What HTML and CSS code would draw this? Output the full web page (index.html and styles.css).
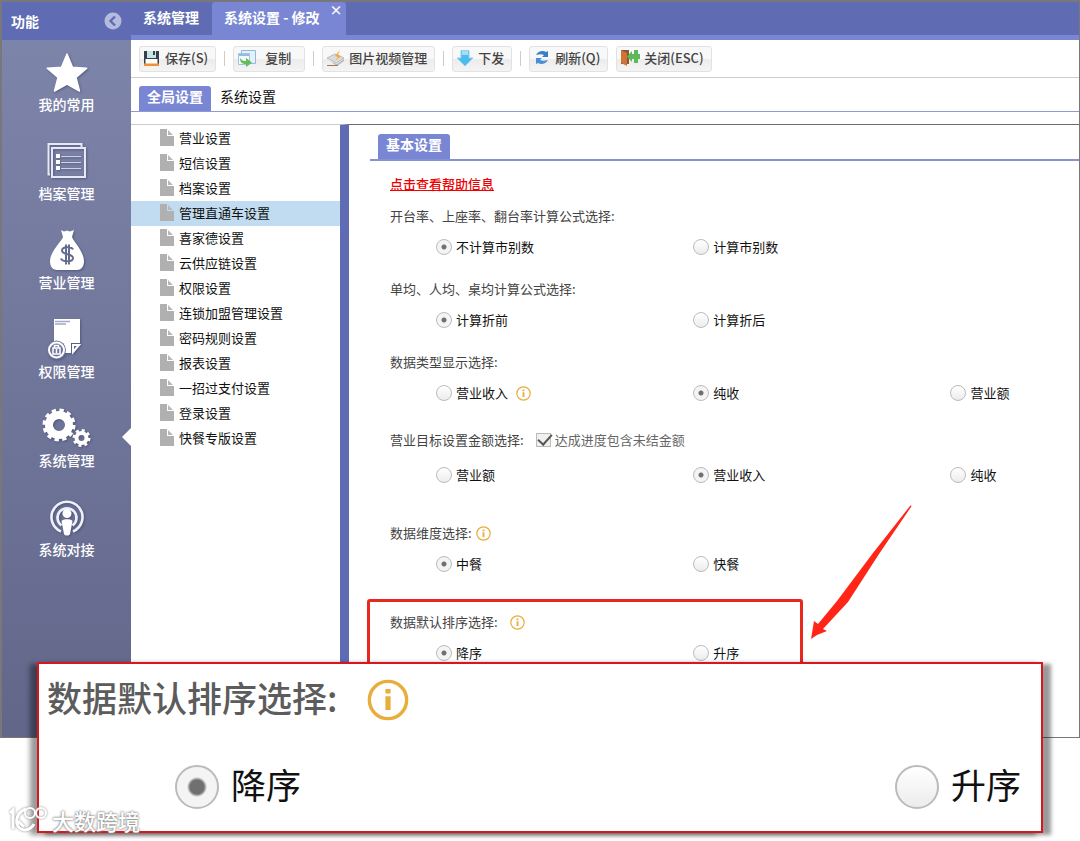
FILE: index.html
```html
<!DOCTYPE html>
<html lang="zh-CN">
<head>
    <meta charset="utf-8">
    <title>系统设置 - 修改</title>
    <link rel="stylesheet" href="styles.css">
</head>
<body>
<svg class="defs" width="0" height="0" aria-hidden="true">
    <symbol id="info" viewBox="0 0 16 16">
        <circle cx="8" cy="8" r="7.1" fill="none" stroke="#e8ae3c" stroke-width="1.300"/>
        <path d="M7 6.600h2v5.200H7zM7 3.800h2v1.700H7z" fill="#e8ae3c"/>
    </symbol>
    <symbol id="file" viewBox="0 0 14 17">
        <path d="M0 0h7v7h7v10H0z" fill="#b0b0b0"/>
        <path d="M8 1l5 5H8z" fill="#b8b8b8"/>
    </symbol>
</svg>
<div class="page">
    <div class="app">
        <aside class="sidebar">
            <div class="sidebar-head">
                <span>功能</span>
                <button class="collapse" type="button" aria-label="收起">
                    <svg width="18" height="18" viewBox="0 0 18 18"><circle cx="9" cy="9" r="8.500" fill="#b5bbdd"/><path d="M11 4.500L6.500 9l4.500 4.500" fill="none" stroke="#5f6cb4" stroke-width="2.400"/></svg>
                </button>
            </div>
            <nav class="menu">
                <a class="menu-item" href="#">
                    <svg width="50" height="44" viewBox="0 0 50 44"><path d="M25 4l5.500 13.200 14.300 1L34 27.500 37.500 41 25 34l-12.500 7L16 27.500 5.200 18.200l14.300-1z" fill="#fff" stroke="#fff" stroke-width="1.500" stroke-linejoin="round"/></svg>
                    <span>我的常用</span>
                </a>
                <a class="menu-item" href="#">
                    <svg width="50" height="44" viewBox="0 0 50 44"><g fill="none" stroke="#e6e9f5" stroke-width="2"><path d="M8 35.500H6.500V5h33v3"/><rect x="10" y="9" width="33" height="29"/></g><g fill="#fff"><path d="M14 15h4v4h-4zM14 21h4v4h-4zM14 27h4v4h-4z"/></g><path d="M19 17.500h20M19 23.500h20M19 29.500h20" stroke="#ccd1e8" stroke-width="1.200"/></svg>
                    <span>档案管理</span>
                </a>
                <a class="menu-item" href="#">
                    <svg width="50" height="44" viewBox="0 0 50 44"><path d="M19 2l3 1.500 3-1 3 1 4-1.500-2 7c2 5 12 15 12 24 0 6-3 9-7 9H15c-4 0-7-3-7-9 0-9 11-19 13-24z" fill="#fff"/><path d="M31 21.500c-1-3-11-3.500-11 1 0 5 11 2.500 11 7.500 0 4.500-11 4-12 .5M24 16.500v20M27 16.500v20" fill="none" stroke="#646b91" stroke-width="2"/></svg>
                    <span>营业管理</span>
                </a>
                <a class="menu-item" href="#">
                    <svg width="50" height="44" viewBox="0 0 50 44"><path d="M12 2h26v24h-9v10H12z" fill="#fff"/><path d="M37 28L31 35V28z" fill="none" stroke="#fff" stroke-width="2"/><path d="M13 4.500h15M13 7h11" stroke="#a4a9c6" stroke-width="1.500"/><circle cx="14.500" cy="33" r="9.500" fill="#70769d"/><circle cx="14.500" cy="33" r="7.500" fill="#70769d" stroke="#fff" stroke-width="2"/><path d="M11 31h7v6h-7zM12.500 31V28.500h4V31M14.500 32v4" fill="none" stroke="#fff" stroke-width="1.500"/></svg>
                    <span>权限管理</span>
                </a>
                <a class="menu-item active" href="#">
                    <svg width="50" height="44" viewBox="0 0 50 44"><circle cx="17" cy="19" r="10" fill="none" stroke="#fff" stroke-width="8"/><circle cx="17" cy="19" r="14.500" fill="none" stroke="#fff" stroke-width="4" stroke-dasharray="4.200 3.390"/><circle cx="39.500" cy="32" r="5" fill="none" stroke="#fff" stroke-width="4"/><circle cx="39.500" cy="32" r="7.500" fill="none" stroke="#fff" stroke-width="3" stroke-dasharray="2.900 2.990"/></svg>
                    <span>系统管理</span>
                </a>
                <a class="menu-item" href="#">
                    <svg width="50" height="44" viewBox="0 0 50 44"><g fill="none" stroke="#eef0fa" stroke-width="2.600"><path d="M19 36.500A15.500 15.500 0 1 1 31 36.500"/><path d="M19.500 30.500A9.500 9.500 0 1 1 30.500 30.500"/></g><circle cx="25" cy="18.500" r="4.500" fill="#fff"/><path d="M19.500 26c1-2.500 10-2.500 11 0L28 39c-1 2-5 2-6 0z" fill="#fff"/></svg>
                    <span>系统对接</span>
                </a>
            </nav>
        </aside>

        <div class="workspace">
            <header class="tabs">
                <a class="tab" href="#">系统管理</a>
                <div class="tab current">
                    <a href="#">系统设置 - 修改</a>
                    <button class="tab-close" type="button" aria-label="关闭标签">×</button>
                </div>
            </header>

            <div class="toolbar">
                <button class="tool" type="button">
                    <svg width="18" height="18" viewBox="0 0 18 18"><path d="M1 2h15v15H1z" fill="#34404c"/><path d="M4 2h9v7H4z" fill="#c9e3e6"/><path d="M10 2h2v4h-2z" fill="#34404c"/><path d="M2.500 10h12v5h-12z" fill="#fff"/><path d="M1 14.500h15V17H1z" fill="#ee9238"/></svg>
                    保存(S)
                </button>
                <i class="sep"></i>
                <button class="tool copy" type="button">
                    <svg width="20" height="18" viewBox="0 0 20 18"><path d="M4.500 1.500h14v13h-14z" fill="#e4f1fb" stroke="#90b9dd"/><path d="M1.500 4.500h11v11h-11z" fill="#f3f8fd" stroke="#a3c5e3"/><path d="M2 5h10v2H2z" fill="#8dbce6"/><path d="M3 9c2 3 4 3 6 3V9l6 4.500L9 18v-3c-4 0-6-2-6-6z" fill="#65bd58"/></svg>
                    复制
                </button>
                <i class="sep"></i>
                <button class="tool" type="button">
                    <svg width="19" height="18" viewBox="0 0 19 18"><path d="M1 9l8-4 9 4-8 5z" fill="#dcdcdc" stroke="#bbb"/><path d="M5 13l6 2 7-5v2l-7 5z" fill="#b7b7b7"/><path d="M14 1L9 7l3 1-3 4 6-5-3-1z" fill="#f2a93b"/><path d="M1 16.500h11" stroke="#a6784d"/></svg>
                    图片视频管理
                </button>
                <i class="sep"></i>
                <button class="tool" type="button">
                    <svg width="18" height="18" viewBox="0 0 18 18"><path d="M5 1.500h8V9h4l-8 8-8-8h4z" fill="#4dbbed" stroke="#8bd3f2"/><path d="M6 2h6v4H6z" fill="#a6def5"/></svg>
                    下发
                </button>
                <i class="sep"></i>
                <button class="tool" type="button">
                    <svg width="18" height="18" viewBox="0 0 18 18"><path d="M3 6c2-4 7-5 10-3l2-1v6H9l2-2C9 5 6 5 3 6z" fill="#387fc7"/><path d="M15 11c-2 4-7 5-10 3l-2 1V9h6l-2 2c2 1 5 1 8 0z" fill="#4a8fd3"/></svg>
                    刷新(Q)
                </button>
                <button class="tool" type="button">
                    <svg width="20" height="18" viewBox="0 0 20 18"><path d="M1 1h8v14H1z" fill="#8b5730"/><path d="M1 1l6 3v13l-6-3z" fill="#cf7435"/><path d="M7 7.500L12 2v3h2V1h4v4h2v5h-2v4h-4v-4h-2v3z" fill="#5db95a"/></svg>
                    关闭(ESC)
                </button>
            </div>

            <div class="subtabs">
                <a class="subtab on" href="#">全局设置</a>
                <a class="subtab" href="#">系统设置</a>
            </div>

            <div class="panes">
                <ul class="tree">
                    <li><a href="#"><svg><use href="#file"/></svg>营业设置</a></li>
                    <li><a href="#"><svg><use href="#file"/></svg>短信设置</a></li>
                    <li><a href="#"><svg><use href="#file"/></svg>档案设置</a></li>
                    <li><a class="selected" href="#"><svg><use href="#file"/></svg>管理直通车设置</a></li>
                    <li><a href="#"><svg><use href="#file"/></svg>喜家德设置</a></li>
                    <li><a href="#"><svg><use href="#file"/></svg>云供应链设置</a></li>
                    <li><a href="#"><svg><use href="#file"/></svg>权限设置</a></li>
                    <li><a href="#"><svg><use href="#file"/></svg>连锁加盟管理设置</a></li>
                    <li><a href="#"><svg><use href="#file"/></svg>密码规则设置</a></li>
                    <li><a href="#"><svg><use href="#file"/></svg>报表设置</a></li>
                    <li><a href="#"><svg><use href="#file"/></svg>一招过支付设置</a></li>
                    <li><a href="#"><svg><use href="#file"/></svg>登录设置</a></li>
                    <li><a href="#"><svg><use href="#file"/></svg>快餐专版设置</a></li>
                </ul>

                <form class="settings">
                    <div class="section-head"><h2>基本设置</h2></div>
                    <div class="groups">
                        <a class="help" href="#">点击查看帮助信息</a>

                        <div class="group">
                            <div class="group-title">开台率、上座率、翻台率计算公式选择:</div>
                            <div class="options">
                                <label><input type="radio" name="market" checked>不计算市别数</label>
                                <label><input type="radio" name="market">计算市别数</label>
                            </div>
                        </div>

                        <div class="group">
                            <div class="group-title">单均、人均、桌均计算公式选择:</div>
                            <div class="options">
                                <label><input type="radio" name="average" checked>计算折前</label>
                                <label><input type="radio" name="average">计算折后</label>
                            </div>
                        </div>

                        <div class="group">
                            <div class="group-title">数据类型显示选择:</div>
                            <div class="options">
                                <label><input type="radio" name="datatype">营业收入 <svg class="info"><use href="#info"/></svg></label>
                                <label><input type="radio" name="datatype" checked>纯收</label>
                                <label><input type="radio" name="datatype">营业额</label>
                            </div>
                        </div>

                        <div class="group target">
                            <div class="group-title">
                                营业目标设置金额选择:
                                <label class="check"><input type="checkbox" checked>达成进度包含未结金额</label>
                            </div>
                            <div class="options">
                                <label><input type="radio" name="target">营业额</label>
                                <label><input type="radio" name="target" checked>营业收入</label>
                                <label><input type="radio" name="target">纯收</label>
                            </div>
                        </div>

                        <div class="group roomy">
                            <div class="group-title near">数据维度选择: <svg class="info"><use href="#info"/></svg></div>
                            <div class="options">
                                <label><input type="radio" name="dimension" checked>中餐</label>
                                <label><input type="radio" name="dimension">快餐</label>
                            </div>
                        </div>

                        <div class="group roomy">
                            <div class="group-title">数据默认排序选择: <svg class="info"><use href="#info"/></svg></div>
                            <div class="options">
                                <label><input type="radio" name="sort" checked>降序</label>
                                <label><input type="radio" name="sort">升序</label>
                            </div>
                        </div>
                    </div>
                </form>
            </div>
        </div>
    </div>

    <!-- callout over the sort setting -->
    <div class="mark"></div>
    <svg class="arrow" width="104" height="136" viewBox="0 0 104 136"><path d="M101 2c1-1 2 0 1 1L70 50 39 98 14 125l4 2-10 4-6 4 3-18 4 3L28 97 64 49z" fill="#ff2618"/></svg>

    <section class="callout">
        <div class="callout-title"><span>数据默认排序选择:</span><svg><use href="#info"/></svg></div>
        <div class="callout-options">
            <label><input type="radio" name="sort-large" checked><span>降序</span></label>
            <label><input type="radio" name="sort-large"><span>升序</span></label>
        </div>
    </section>

    <div class="watermark">
        <svg width="40" height="30" viewBox="0 0 40 30"><g fill="none" stroke="#fff" stroke-width="3"><path d="M2 8l3-3v19"/><path d="M18 4C9 7 7 16 10 21c4 6 12 5 16-2M10 16l6 6"/><circle cx="22" cy="8" r="5" stroke-width="2"/><circle cx="33" cy="8" r="5" stroke-width="2"/></g></svg>
        <span>大数跨境</span>
    </div>
</div>
</body>
</html>
```
FILE: styles.css
```css
* {
    box-sizing: border-box;
}

body {
    margin: 0;
    background: #fff;
    color: #111;
    font-family: "Noto Sans CJK SC", "Liberation Sans", sans-serif;
    font-size: 13px;
    line-height: 20px;
}

a {
    color: inherit;
    text-decoration: none;
}

button {
    font: inherit;
    cursor: pointer;
}

.defs {
    position: absolute;
}

.page {
    position: relative;
    overflow: hidden;
    min-height: 100vh;
}

.app {
    display: flex;
    min-height: 738px;
    border: 1px solid #77777c;
    border-width: 2px 1px 1px 2px;
}

/* left menu */
.sidebar {
    flex: 0 0 129px;
    background: linear-gradient(#7f86ab, #62678a);
    color: #fff;
}

.sidebar-head {
    display: flex;
    align-items: center;
    justify-content: space-between;
    height: 38px;
    padding: 0 9px;
    background: #5f6cb4;
    font-size: 14px;
    font-weight: bold;
}

.collapse {
    display: flex;
    padding: 0;
    border: 0;
    background: none;
}

.menu {
    display: flex;
    flex-direction: column;
    gap: 25px;
    padding-top: 10px;
}

.menu-item {
    position: relative;
    display: flex;
    flex-direction: column;
    align-items: center;
    font-size: 14px;
    font-weight: 500;
}

.menu-item svg {
    filter: drop-shadow(1px 1px 1px rgba(50, 55, 90, 0.5));
}

.menu-item.active::after {
    content: "";
    position: absolute;
    right: 0;
    top: 22px;
    border: 9px solid transparent;
    border-right-color: #fff;
    border-left: 0;
}

/* window tabs */
.workspace {
    flex: 1;
    min-width: 0;
    display: flex;
    flex-direction: column;
}

.tabs {
    display: flex;
    height: 38px;
    background: #5f6cb4;
    border-bottom: 5px solid #7986d3;
    color: #fff;
    font-size: 14px;
    font-weight: bold;
}

.tab {
    padding: 5px 13px 0 12px;
}

.tab.current {
    position: relative;
    padding-right: 26px;
    background: #7986d3;
    border-radius: 3px 3px 0 0;
}

.tab-close {
    position: absolute;
    top: 0;
    right: 3px;
    padding: 0;
    border: 0;
    background: none;
    color: #fff;
    font-size: 13px;
    line-height: 16px;
}

/* toolbar */
.toolbar {
    display: flex;
    align-items: center;
    gap: 8px;
    height: 38px;
    padding: 0 8px;
    border-bottom: 1px solid #ccc;
}

.tool {
    display: flex;
    align-items: center;
    gap: 4px;
    height: 26px;
    padding: 0 7px 1px 3px;
    border: 1px solid #e2e2e2;
    border-radius: 3px;
    background: linear-gradient(#f8f8f8 50%, #ececec 50%, #f4f4f4);
    color: #444;
    font-weight: 500;
    white-space: nowrap;
}

.tool.copy {
    gap: 8px;
    padding-right: 13px;
}

.sep {
    width: 1px;
    height: 15px;
    background: #ccc;
}

.subtabs {
    display: flex;
    height: 34px;
    padding: 8px 8px 0;
    border-bottom: 1px solid #8f9ad4;
    font-size: 14px;
}

.subtab {
    padding: 0 9px;
}

.subtab.on,
.section-head h2 {
    padding: 0 8px;
    border-radius: 3px 3px 0 0;
    background: #7986d3;
    color: #fff;
    font-weight: bold;
}

/* settings tree */
.panes {
    flex: 1;
    display: flex;
    margin-top: 12px;
}

.tree {
    flex: 0 0 218px;
    margin: 0;
    padding: 1px 0 0;
    border-top: 1px solid #ccc;
    border-right: 9px solid #5f6cb4;
    list-style: none;
}

.tree a {
    display: flex;
    align-items: center;
    gap: 5px;
    height: 25px;
    padding: 0 0 2px 29px;
}

.tree svg {
    width: 14px;
    height: 17px;
}

.tree .selected {
    background: #c1dcf0;
}

/* settings form */
.settings {
    flex: 1;
    min-width: 0;
    padding: 9px 0 0 21px;
    border-top: 1px solid #6c6c70;
}

.section-head {
    display: flex;
    padding-left: 8px;
    border-bottom: 2px solid #8692d6;
}

.section-head h2 {
    height: 25px;
    margin: 0;
    font-size: 14px;
}

.groups {
    padding: 13px 0 0 20px;
}

.help {
    color: #f00000;
    font-weight: 500;
    text-decoration: underline;
}

.group {
    margin-top: 22px;
}

.help + .group {
    margin-top: 12px;
}

.group.target {
    margin-top: 27px;
}

.group.roomy {
    margin-top: 38px;
}

.group-title {
    display: flex;
    align-items: center;
    gap: 12px;
    color: #444;
}

.group-title.near {
    gap: 4px;
}

.options {
    display: grid;
    grid-template-columns: 2fr 2fr 1fr;
    margin-top: 11px;
    padding-left: 46px;
}

.target .options {
    margin-top: 15px;
}

label {
    display: flex;
    align-items: center;
    gap: 4px;
}

.info {
    width: 15px;
    height: 15px;
}

.options .info {
    margin-left: 4px;
}

input[type="radio"] {
    appearance: none;
    width: 16px;
    height: 16px;
    margin: 0;
    border: 1px solid #bbb;
    border-radius: 50%;
    background: linear-gradient(#fff, #ececec);
}

input[type="radio"]:checked {
    background: radial-gradient(circle, #707070 2px, #f4f4f4 3px);
}

.check {
    color: #666;
}

.check input {
    appearance: none;
    width: 15px;
    height: 14px;
    margin: 0;
    border: 1px solid #bbb;
    background: #f0f0f0;
    position: relative;
}

.check input:checked::after {
    content: "";
    position: absolute;
    left: 4px;
    top: -3px;
    width: 6px;
    height: 12px;
    border: solid #555;
    border-width: 0 2px 2px 0;
    transform: rotate(42deg);
}

/* annotation layer */
.mark {
    position: absolute;
    left: 367px;
    top: 599px;
    width: 436px;
    height: 80px;
    border: 3px solid #e8281c;
    border-radius: 3px;
}

.arrow {
    position: absolute;
    left: 809px;
    top: 504px;
}

.callout {
    position: absolute;
    left: 37px;
    right: 37px;
    top: 662px;
    padding: 14px 20px 22px 8px;
    border: 2px solid #d9161b;
    background: #fff;
    box-shadow: 8px 2px 4px rgba(0, 0, 0, 0.4), -7px 2px 5px rgba(0, 0, 0, 0.4);
    font-size: 35px;
    line-height: 38px;
}

.callout span {
    padding-bottom: 6px;
}

.callout-title {
    display: flex;
    align-items: center;
    gap: 30px;
    color: #5c5c5c;
    font-weight: 500;
}

.callout-title svg {
    width: 42px;
    height: 42px;
}

.callout-options {
    display: flex;
    justify-content: space-between;
    margin-top: 43px;
    padding-left: 128px;
}

.callout label {
    gap: 12px;
}

.callout input[type="radio"] {
    width: 44px;
    height: 44px;
    border: 2px solid #bbb;
}

.callout input[type="radio"]:checked {
    background: radial-gradient(circle, #707070 7px, #f4f4f4 10px);
}

.watermark {
    position: absolute;
    left: 8px;
    top: 805px;
    display: flex;
    align-items: center;
    gap: 4px;
    color: #fff;
    font-size: 22px;
    font-weight: 500;
    line-height: 30px;
    text-shadow: 0 0 2px #777, 0 0 3px #999;
}

.watermark svg {
    filter: drop-shadow(0 0 1px #888);
}
```
